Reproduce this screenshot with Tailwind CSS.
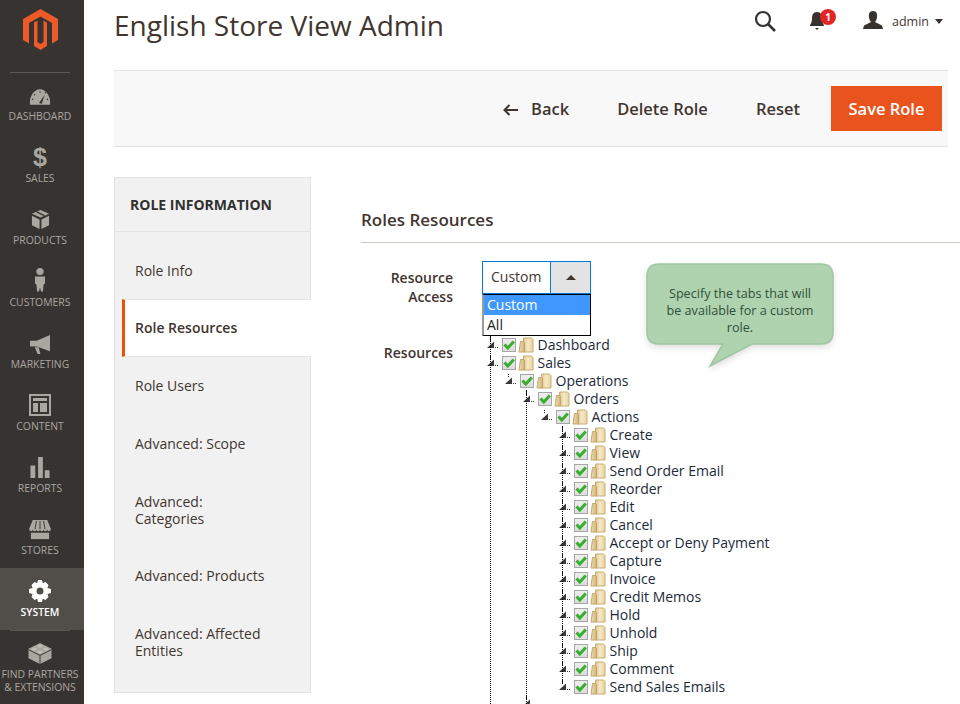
<!DOCTYPE html>
<html lang="en">
<head>
<meta charset="utf-8">
<title>Roles Resources</title>
<script src="https://cdn.jsdelivr.net/npm/@tailwindcss/browser@4"></script>
</head>
<body class="bg-white font-['Open_Sans',sans-serif] overflow-hidden">
<svg class="absolute" width="0" height="0">
  <defs>
    <linearGradient id="fb" x1="0" y1="0" x2="1" y2="0"><stop offset="0" stop-color="#dcc38b"/><stop offset=".45" stop-color="#f6e9c6"/><stop offset="1" stop-color="#e8d39f"/></linearGradient>
    <linearGradient id="ff" x1="0" y1="0" x2="1" y2="0"><stop offset="0" stop-color="#f3e2b8"/><stop offset="1" stop-color="#cfb178"/></linearGradient>
    <linearGradient id="cb" x1="0" y1="0" x2="0" y2="1"><stop offset="0" stop-color="#efefef"/><stop offset="1" stop-color="#dcdcdc"/></linearGradient>
  </defs>
  <symbol id="arw" viewBox="0 0 12 14">
    <path d="M4.500 0v3" stroke="#222" stroke-width="1" stroke-dasharray="1 1"/>
    <path d="M1 10 L8 3.500 V10 Z" fill="#3a3a3a"/>
    <path d="M9 9.500h1M11 9.500h1" stroke="#333" stroke-width="1"/>
  </symbol>
  <symbol id="chk" viewBox="0 0 14 14">
    <rect x=".5" y=".5" width="13" height="13" fill="url(#cb)" stroke="#a6a6a6"/>
    <path d="M2.500 6.500 L5.800 10 L11.800 3.500" fill="none" stroke="#38ad2f" stroke-width="3"/>
  </symbol>
  <symbol id="fld" viewBox="0 0 16 16">
    <path d="M5.500 1 H13.500 L15 2.500 V15 H5.500 Z" fill="url(#fb)" stroke="#c9ad72" stroke-width="1"/>
    <path d="M1 15 L2.500 4.500 H5.500 L6.500 5.500 V15 Z" fill="url(#ff)" stroke="#c4a66a" stroke-width="1"/>
  </symbol>
</svg>

<div class="flex w-[960px] h-[704px] overflow-hidden">
  <!-- Sidebar -->
  <aside class="w-[84px] h-[704px] shrink-0 bg-[#373330] flex flex-col text-[#aaa6a0] text-[10.4px] leading-[13px] uppercase text-center">
    <div class="h-[72px] pl-[10px] pr-[14px]">
      <div class="h-[73px] border-b border-[#5c5854]">
        <svg width="60" height="60" viewBox="10 0 60 60" class="block">
          <path d="M40.500 9 L58 19 V40 L52 43.500 V23 L40.500 16.500 L29 23 V43.500 L23 40 V19 Z" fill="#eb5a28"/>
          <path d="M34 22.500 L37.500 20.500 V42 L40.500 44 L43.500 42 V20.500 L47 22.500 V46 L40.500 50 L34 46 Z" fill="#eb5a28"/>
        </svg>
      </div>
    </div>
    <a class="h-[62px] flex flex-col items-center pr-[4px] pb-[11px] pt-[16px]">
      <svg width="22" height="17" viewBox="0 0 24 18"><path d="M1 18 C0 8 6 1 12 1 C18 1 24 8 23 18 Z" fill="#aaa6a0"/><path d="M11 16 L17 7 L14 17 Z" fill="#373330"/><circle cx="12" cy="4" r=".8" fill="#373330"/><circle cx="6" cy="7" r=".8" fill="#373330"/><circle cx="18" cy="5" r=".8" fill="#373330"/><circle cx="4" cy="12" r=".8" fill="#373330"/><circle cx="20" cy="12" r=".8" fill="#373330"/></svg>
      <span class="mt-auto">Dashboard</span>
    </a>
    <a class="h-[62px] flex flex-col items-center pr-[4px] pb-[11px] pt-[13px]">
      <span class="h-[20px] text-[25px] leading-[20px] font-bold font-['Liberation_Sans',sans-serif]">$</span>
      <span class="mt-auto">Sales</span>
    </a>
    <a class="h-[62px] flex flex-col items-center pr-[4px] pb-[11px] pt-[13px]">
      <svg width="19" height="21" viewBox="0 0 20 22"><path d="M10 1 L19 5 L10 9 L1 5 Z" fill="#aaa6a0"/><path d="M1 7 L9 11 V21 L1 17 Z" fill="#aaa6a0"/><path d="M11 11 L19 7 V17 L11 21 Z" fill="#aaa6a0"/><path d="M6 3 L14 7" stroke="#373330" stroke-width="1.500"/></svg>
      <span class="mt-auto">Products</span>
    </a>
    <a class="h-[62px] flex flex-col items-center pr-[4px] pb-[11px] pt-[9px]">
      <svg width="12" height="25" viewBox="0 0 12 24"><circle cx="6" cy="4" r="3.600" fill="#aaa6a0"/><path d="M1 9 H11 L11 16 L9.500 17 L9 24 H7 L6 20 L5 24 H3 L2.500 17 L1 16 Z" fill="#aaa6a0"/></svg>
      <span class="mt-auto">Customers</span>
    </a>
    <a class="h-[62px] flex flex-col items-center pr-[4px] pb-[11px] pt-[15px]">
      <svg width="22" height="19" viewBox="0 0 23 20"><path d="M22 0 V17 L8 12 H1 V6 H8 Z" fill="#aaa6a0"/><path d="M6 13 H10 L12 20 H9 Z" fill="#aaa6a0"/></svg>
      <span class="mt-auto">Marketing</span>
    </a>
    <a class="h-[62px] flex flex-col items-center pr-[4px] pb-[11px] pt-[12px]">
      <svg width="22" height="22" viewBox="0 0 22 22"><path d="M0 0 H22 V22 H0 Z M2 2 V20 H20 V2 Z" fill="#aaa6a0" fill-rule="evenodd"/><path d="M4 4 H18 V7 H4 Z M4 9 H9 V18 H4 Z M11 9 H18 V18 H11 Z" fill="#aaa6a0"/></svg>
      <span class="mt-auto">Content</span>
    </a>
    <a class="h-[62px] flex flex-col items-center pr-[4px] pb-[11px] pt-[13px]">
      <svg width="20" height="21" viewBox="0 0 20 22"><path d="M0 9 H5 V22 H0 Z M8 0 H13 V22 H8 Z M15 14 H20 V22 H15 Z" fill="#aaa6a0"/></svg>
      <span class="mt-auto">Reports</span>
    </a>
    <a class="h-[62px] flex flex-col items-center pr-[4px] pb-[11px] pt-[14px]">
      <svg width="24" height="20" viewBox="0 0 24 22"><path d="M4 0 H20 L24 10 C24 13 20 13 20 10.500 C20 13 16 13 16 10.500 C16 13 12 13 12 10.500 C12 13 8 13 8 10.500 C8 13 4 13 4 10.500 C4 13 0 13 0 10 Z" fill="#aaa6a0"/><path d="M8 1 L6.500 10 M12 1 V10 M16 1 L17.500 10" stroke="#373330" stroke-width="1"/><path d="M2 14 H22 V21 H2 Z" fill="#aaa6a0"/></svg>
      <span class="mt-auto">Stores</span>
    </a>
    <a class="h-[62px] flex flex-col items-center pr-[4px] pb-[11px] pt-[12px] bg-[#514d49] text-white font-semibold">
      <svg width="22" height="22" viewBox="0 0 22 22"><path fill-rule="evenodd" fill="#fff" d="M9 0 H13 L13.800 3.200 L16.500 2 L19.500 5 L18.500 8 L22 9 V13 L18.500 14 L19.500 17 L16.500 20 L13.800 18.800 L13 22 H9 L8.200 18.800 L5.500 20 L2.500 17 L3.500 14 L0 13 V9 L3.500 8 L2.500 5 L5.500 2 L8.200 3.200 Z M11 7.500 A3.500 3.500 0 1 0 11 14.500 A3.500 3.500 0 1 0 11 7.500 Z"/></svg>
      <span class="mt-auto">System</span>
    </a>
    <a class="relative flex flex-col items-center pr-[4px] pt-[12px]">
      <span class="absolute left-[10px] top-0 w-[60px] border-t border-[#5c5854]"></span>
      <svg width="24" height="23" viewBox="0 0 24 24"><path d="M12 1 L24 7 V17 L12 23 L0 17 V7 Z" fill="#aaa6a0"/><ellipse cx="12" cy="4.500" rx="2.500" ry="1.400" fill="#c3bfb9"/><ellipse cx="6" cy="7.500" rx="2.500" ry="1.400" fill="#c3bfb9"/><ellipse cx="18" cy="7.500" rx="2.500" ry="1.400" fill="#c3bfb9"/><ellipse cx="12" cy="10.500" rx="2.500" ry="1.400" fill="#c3bfb9"/><path d="M0 8 L12 14 L24 8 M12 14 V23" stroke="#373330" stroke-width="1" fill="none"/></svg>
      <span class="mt-[3px] block whitespace-nowrap">Find Partners<br>&amp; Extensions</span>
    </a>
  </aside>

  <!-- Main -->
  <main class="w-[876px] h-[704px] shrink-0 overflow-hidden text-[#41362f]">
    <header class="h-[70px] pl-[30px] flex items-start relative">
      <h1 class="text-[28px] leading-[38px] mt-[6px] font-normal text-[#41362f]">English Store View Admin</h1>
      <div class="ml-auto flex items-start">
        <svg width="22" height="22" viewBox="0 0 22 22" class="absolute left-[670px] top-[10px]"><circle cx="9" cy="9" r="7" fill="none" stroke="#373330" stroke-width="2.200"/><path d="M14 14 L21 21" stroke="#373330" stroke-width="2.600"/></svg>
        <span class="absolute left-[725px] top-[11px]">
          <svg width="17" height="20" viewBox="0 0 17 20" class="block"><path d="M8 1 C12 1 13 4 13 8 C13 12 15 13 15 15 H1 C1 13 3 12 3 8 C3 4 4 1 8 1 Z M6 17 H10 L8 19 Z" fill="#373330"/></svg>
          <span class="absolute left-[11px] -top-[2px] w-[16px] h-[16px] rounded-full bg-[#e22626] text-white text-[10px] leading-[16px] font-bold text-center">1</span>
        </span>
        <svg width="20" height="20" viewBox="0 0 20 20" class="absolute left-[779px] top-[11px]"><path d="M10 0 C13.500 0 14.500 3 14 6 C13.800 8 13 10 12 11 L19 14.500 L20 18 H0 L1 14.500 L8 11 C7 10 6.200 8 6 6 C5.500 3 6.500 0 10 0 Z" fill="#373330"/></svg>
        <span class="absolute left-[808px] top-[12px] text-[12.500px] leading-[20px] text-[#41362f]">admin</span>
        <span class="absolute left-[851px] top-[19px] w-0 h-0 border-x-[4px] border-x-transparent border-t-[5px] border-t-[#373330]"></span>
      </div>
    </header>

    <div class="ml-[30px] mr-[12px] h-[77px] bg-[#f8f8f8] border-y border-[#e3e3e3] flex items-center justify-end pr-[6px] text-[16.500px] font-semibold">
      <a class="flex items-center mr-[48px] pt-[2px]">
        <svg width="16" height="12" viewBox="0 0 16 12" class="mr-[12px]"><path d="M15 6 H2 M6.500 1 L1.500 6 L6.500 11" fill="none" stroke="#41362f" stroke-width="2"/></svg>
        Back
      </a>
      <a class="mr-[48px] pt-[2px]">Delete Role</a>
      <a class="mr-[31px] pt-[2px]">Reset</a>
      <button class="w-[111px] h-[45px] bg-[#e9531e] text-white font-semibold pt-[1px]">Save Role</button>
    </div>

    <div class="flex mt-[30px] pl-[30px]">
      <!-- Left nav -->
      <nav class="w-[197px] h-[516px] shrink-0 relative bg-[#f1f1f1] border border-[#e3e3e3] text-[14px] leading-[17px] text-[#41362f]">
        <div class="h-[54px] border-b border-[#e3e3e3] pl-[15px] flex items-center font-bold text-[14px] text-[#303030]">ROLE INFORMATION</div>
        <div class="h-[67px] pl-[20px] flex items-center pt-[10px]">Role Info</div>
        <div class="h-[58px] -mr-[1px] ml-[7px] bg-white border-l-[3px] border-l-[#eb5202] border-y border-y-[#e3e3e3] pl-[10px] pb-[2px] flex items-center font-semibold">Role Resources</div>
        <div class="h-[58px] pl-[20px] pb-[2px] flex items-center">Role Users</div>
        <div class="h-[58px] pl-[20px] pb-[2px] flex items-center">Advanced: Scope</div>
        <div class="h-[74px] pl-[20px] flex items-center"><span class="block">Advanced:<br>Categories</span></div>
        <div class="h-[58px] pl-[20px] pb-[2px] flex items-center">Advanced: Products</div>
        <div class="h-[75px] pl-[20px] pb-[2px] flex items-center"><span class="block">Advanced: Affected<br>Entities</span></div>
      </nav>

      <!-- Content -->
      <section class="ml-[50px] w-[599px] shrink-0 relative">
        <h2 class="h-[66px] border-b border-[#cfcac2] pt-[32px] text-[17px] leading-[22px] font-semibold text-[#41362f]">Roles Resources</h2>
        <div class="flex mt-[18px] h-[75px]">
          <label class="w-[92px] text-right text-[14px] leading-[19px] font-semibold pt-[7px]">Resource<br>Access</label>
          <div class="ml-[29px] relative">
            <div class="w-[109px] h-[33px] border border-[#007bdb] flex text-[14px] bg-white">
              <span class="flex-1 pl-[8px] leading-[30px]">Custom</span>
              <span class="w-[40px] bg-[#e3e3e3] border-l border-[#007bdb] flex items-center justify-center">
                <span class="w-0 h-0 border-x-[5px] border-x-transparent border-b-[5px] border-b-[#41362f]"></span>
              </span>
            </div>
            <ul class="absolute left-0 top-[33px] w-[109px] h-[42px] bg-white border border-black border-l-[2px] border-l-[#9a9a9a] text-[14px] leading-[20px] text-[#202020] z-10">
              <li class="h-[20px] bg-[#3e98ff] text-white pl-[3px]">Custom</li>
              <li class="h-[20px] pl-[3px]">All</li>
            </ul>
          </div>
        </div>

        <div class="flex">
          <label class="w-[92px] text-right text-[14px] leading-[19px] font-semibold pt-[7px]">Resources</label>
          <div class="ml-[33px] relative h-[370px] text-[14px] leading-[18px] text-[#1c2a3a]">
            <span class="absolute left-[4px] top-0 h-[368px] border-l border-dotted border-black"></span>
            <span class="absolute left-[40px] top-[54px] h-[314px] border-l border-dotted border-black"></span>
            <span class="absolute left-[76px] top-[90px] h-[258px] border-l border-dotted border-black"></span>

            <div class="h-[18px] flex items-center whitespace-nowrap"><svg width="12" height="14" class="mr-[4px]"><use href="#arw"/></svg><svg width="14" height="14" class="mr-[2px]"><use href="#chk"/></svg><svg width="16" height="16" class="mr-[3.5px]"><use href="#fld"/></svg>Dashboard</div>
            <div class="h-[18px] flex items-center whitespace-nowrap"><svg width="12" height="14" class="mr-[4px]"><use href="#arw"/></svg><svg width="14" height="14" class="mr-[2px]"><use href="#chk"/></svg><svg width="16" height="16" class="mr-[3.5px]"><use href="#fld"/></svg>Sales</div>
            <div class="h-[18px] flex items-center whitespace-nowrap pl-[18px]"><svg width="12" height="14" class="mr-[4px]"><use href="#arw"/></svg><svg width="14" height="14" class="mr-[2px]"><use href="#chk"/></svg><svg width="16" height="16" class="mr-[3.5px]"><use href="#fld"/></svg>Operations</div>
            <div class="h-[18px] flex items-center whitespace-nowrap pl-[36px]"><svg width="12" height="14" class="mr-[4px]"><use href="#arw"/></svg><svg width="14" height="14" class="mr-[2px]"><use href="#chk"/></svg><svg width="16" height="16" class="mr-[3.5px]"><use href="#fld"/></svg>Orders</div>
            <div class="h-[18px] flex items-center whitespace-nowrap pl-[54px]"><svg width="12" height="14" class="mr-[4px]"><use href="#arw"/></svg><svg width="14" height="14" class="mr-[2px]"><use href="#chk"/></svg><svg width="16" height="16" class="mr-[3.5px]"><use href="#fld"/></svg>Actions</div>
            <div class="h-[18px] flex items-center whitespace-nowrap pl-[72px]"><svg width="12" height="14" class="mr-[4px]"><use href="#arw"/></svg><svg width="14" height="14" class="mr-[2px]"><use href="#chk"/></svg><svg width="16" height="16" class="mr-[3.5px]"><use href="#fld"/></svg>Create</div>
            <div class="h-[18px] flex items-center whitespace-nowrap pl-[72px]"><svg width="12" height="14" class="mr-[4px]"><use href="#arw"/></svg><svg width="14" height="14" class="mr-[2px]"><use href="#chk"/></svg><svg width="16" height="16" class="mr-[3.5px]"><use href="#fld"/></svg>View</div>
            <div class="h-[18px] flex items-center whitespace-nowrap pl-[72px]"><svg width="12" height="14" class="mr-[4px]"><use href="#arw"/></svg><svg width="14" height="14" class="mr-[2px]"><use href="#chk"/></svg><svg width="16" height="16" class="mr-[3.5px]"><use href="#fld"/></svg>Send Order Email</div>
            <div class="h-[18px] flex items-center whitespace-nowrap pl-[72px]"><svg width="12" height="14" class="mr-[4px]"><use href="#arw"/></svg><svg width="14" height="14" class="mr-[2px]"><use href="#chk"/></svg><svg width="16" height="16" class="mr-[3.5px]"><use href="#fld"/></svg>Reorder</div>
            <div class="h-[18px] flex items-center whitespace-nowrap pl-[72px]"><svg width="12" height="14" class="mr-[4px]"><use href="#arw"/></svg><svg width="14" height="14" class="mr-[2px]"><use href="#chk"/></svg><svg width="16" height="16" class="mr-[3.5px]"><use href="#fld"/></svg>Edit</div>
            <div class="h-[18px] flex items-center whitespace-nowrap pl-[72px]"><svg width="12" height="14" class="mr-[4px]"><use href="#arw"/></svg><svg width="14" height="14" class="mr-[2px]"><use href="#chk"/></svg><svg width="16" height="16" class="mr-[3.5px]"><use href="#fld"/></svg>Cancel</div>
            <div class="h-[18px] flex items-center whitespace-nowrap pl-[72px]"><svg width="12" height="14" class="mr-[4px]"><use href="#arw"/></svg><svg width="14" height="14" class="mr-[2px]"><use href="#chk"/></svg><svg width="16" height="16" class="mr-[3.5px]"><use href="#fld"/></svg>Accept or Deny Payment</div>
            <div class="h-[18px] flex items-center whitespace-nowrap pl-[72px]"><svg width="12" height="14" class="mr-[4px]"><use href="#arw"/></svg><svg width="14" height="14" class="mr-[2px]"><use href="#chk"/></svg><svg width="16" height="16" class="mr-[3.5px]"><use href="#fld"/></svg>Capture</div>
            <div class="h-[18px] flex items-center whitespace-nowrap pl-[72px]"><svg width="12" height="14" class="mr-[4px]"><use href="#arw"/></svg><svg width="14" height="14" class="mr-[2px]"><use href="#chk"/></svg><svg width="16" height="16" class="mr-[3.5px]"><use href="#fld"/></svg>Invoice</div>
            <div class="h-[18px] flex items-center whitespace-nowrap pl-[72px]"><svg width="12" height="14" class="mr-[4px]"><use href="#arw"/></svg><svg width="14" height="14" class="mr-[2px]"><use href="#chk"/></svg><svg width="16" height="16" class="mr-[3.5px]"><use href="#fld"/></svg>Credit Memos</div>
            <div class="h-[18px] flex items-center whitespace-nowrap pl-[72px]"><svg width="12" height="14" class="mr-[4px]"><use href="#arw"/></svg><svg width="14" height="14" class="mr-[2px]"><use href="#chk"/></svg><svg width="16" height="16" class="mr-[3.5px]"><use href="#fld"/></svg>Hold</div>
            <div class="h-[18px] flex items-center whitespace-nowrap pl-[72px]"><svg width="12" height="14" class="mr-[4px]"><use href="#arw"/></svg><svg width="14" height="14" class="mr-[2px]"><use href="#chk"/></svg><svg width="16" height="16" class="mr-[3.5px]"><use href="#fld"/></svg>Unhold</div>
            <div class="h-[18px] flex items-center whitespace-nowrap pl-[72px]"><svg width="12" height="14" class="mr-[4px]"><use href="#arw"/></svg><svg width="14" height="14" class="mr-[2px]"><use href="#chk"/></svg><svg width="16" height="16" class="mr-[3.5px]"><use href="#fld"/></svg>Ship</div>
            <div class="h-[18px] flex items-center whitespace-nowrap pl-[72px]"><svg width="12" height="14" class="mr-[4px]"><use href="#arw"/></svg><svg width="14" height="14" class="mr-[2px]"><use href="#chk"/></svg><svg width="16" height="16" class="mr-[3.5px]"><use href="#fld"/></svg>Comment</div>
            <div class="h-[18px] flex items-center whitespace-nowrap pl-[72px]"><svg width="12" height="14" class="mr-[4px]"><use href="#arw"/></svg><svg width="14" height="14" class="mr-[2px]"><use href="#chk"/></svg><svg width="16" height="16" class="mr-[3.5px]"><use href="#fld"/></svg>Send Sales Emails</div>
            <div class="h-[18px] flex items-start whitespace-nowrap pl-[36px]"><svg width="12" height="14"><use href="#arw"/></svg></div>
          </div>
        </div>

        <!-- Callout -->
        <div class="absolute left-[285px] top-[86px] w-[190px] h-[106px] z-20">
          <svg width="190" height="106" viewBox="0 0 190 106" class="absolute left-0 top-0 drop-shadow-md">
            <path d="M13 1 H175 Q187 1 187 13 V69 Q187 81 175 81 H106 L64 103 L77 81 H13 Q1 81 1 69 V13 Q1 1 13 1 Z" fill="#afd2af" stroke="#9fc6a0" stroke-width="1.500"/>
          </svg>
          <p class="absolute left-[16px] top-[22px] w-[156px] text-center text-[12.600px] leading-[17px] text-[#2f5138]">Specify the tabs that will be available for a custom role.</p>
        </div>
      </section>
    </div>
  </main>
</div>
</body>
</html>
